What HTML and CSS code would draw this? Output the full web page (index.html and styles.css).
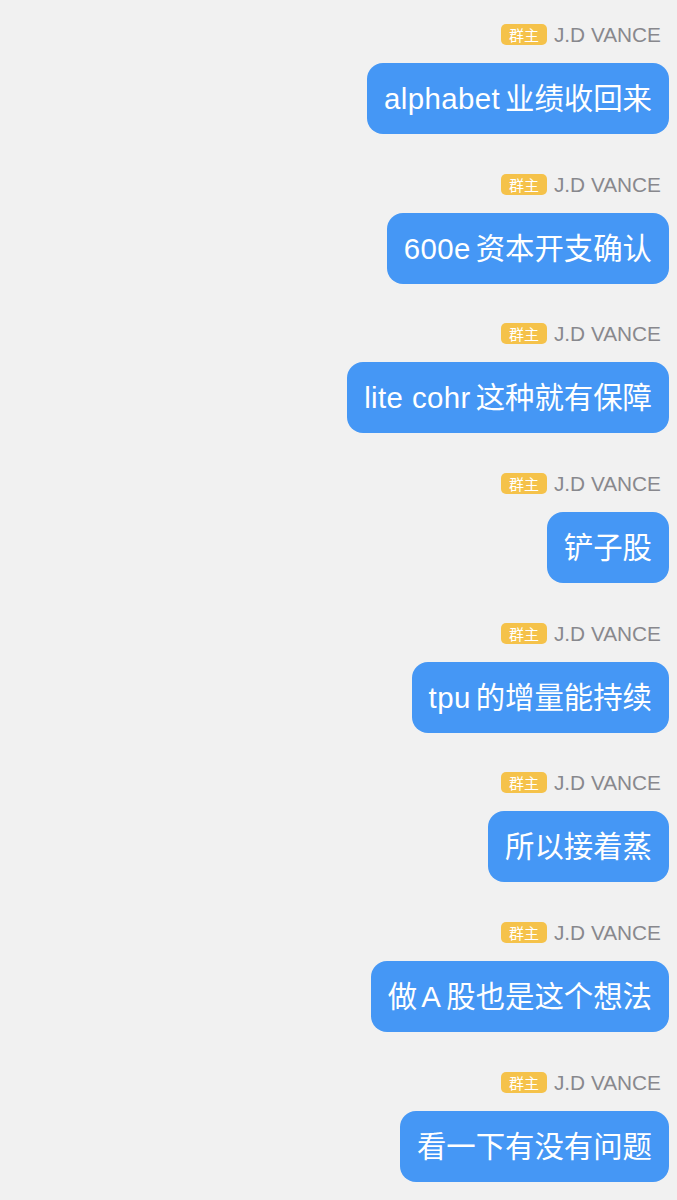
FILE: index.html
```html
<!DOCTYPE html>
<html lang="zh-CN">
<head>
    <meta charset="UTF-8">
    <meta name="viewport" content="width=device-width, initial-scale=1.0">
    <title>群聊</title>
    <link rel="stylesheet" href="styles.css">
</head>
<body>

    <div class="chat">
        <div class="msg">
            <div class="sender"><span class="badge">群主</span><span class="name">J.D VANCE</span></div>
            <div class="bubble"><span class="en">alphabet</span>业绩收回来</div>
        </div>
        <div class="msg">
            <div class="sender"><span class="badge">群主</span><span class="name">J.D VANCE</span></div>
            <div class="bubble"><span class="en">600e</span>资本开支确认</div>
        </div>
        <div class="msg">
            <div class="sender"><span class="badge">群主</span><span class="name">J.D VANCE</span></div>
            <div class="bubble"><span class="en">lite cohr</span>这种就有保障</div>
        </div>
        <div class="msg">
            <div class="sender"><span class="badge">群主</span><span class="name">J.D VANCE</span></div>
            <div class="bubble">铲子股</div>
        </div>
        <div class="msg">
            <div class="sender"><span class="badge">群主</span><span class="name">J.D VANCE</span></div>
            <div class="bubble"><span class="en">tpu</span>的增量能持续</div>
        </div>
        <div class="msg">
            <div class="sender"><span class="badge">群主</span><span class="name">J.D VANCE</span></div>
            <div class="bubble">所以接着蒸</div>
        </div>
        <div class="msg">
            <div class="sender"><span class="badge">群主</span><span class="name">J.D VANCE</span></div>
            <div class="bubble">做<span class="en mid">A</span>股也是这个想法</div>
        </div>
        <div class="msg">
            <div class="sender"><span class="badge">群主</span><span class="name">J.D VANCE</span></div>
            <div class="bubble">看一下有没有问题</div>
        </div>
    </div>

</body>
</html>
```

FILE: styles.css
```css
body {
    margin: 0;
    padding: 0;
    background-color: #f1f1f1;
    font-family: "Liberation Sans", "Noto Sans CJK SC", sans-serif;
}

.chat {
    display: flex;
    flex-direction: column;
    align-items: flex-end;
    padding: 24px 8px 0 0;
}

.msg {
    display: flex;
    flex-direction: column;
    align-items: flex-end;
    margin-bottom: 39.7px;
}

.sender {
    display: flex;
    align-items: center;
    height: 21px;
    margin-right: 8px;
    margin-bottom: 18px;
}

.badge {
    background-color: #f5c24a;
    color: #fff;
    font-size: 15px;
    line-height: 21px;
    height: 21px;
    padding: 0 8px;
    border-radius: 5px;
    font-family: "Noto Sans CJK SC", sans-serif;
}

.name {
    margin-left: 7px;
    color: #88888d;
    font-size: 20.8px;
    line-height: 21px;
}

.bubble {
    background-color: #4597f5;
    color: #fff;
    font-size: 29.4px;
    line-height: 41px;
    padding: 15px 17px;
    border-radius: 16px;
}

/* 英文与中文之间的间距 */
.en {
    letter-spacing: 0.4px;
    margin-right: 5px;
}

.en.mid {
    margin-left: 4px;
}
```
